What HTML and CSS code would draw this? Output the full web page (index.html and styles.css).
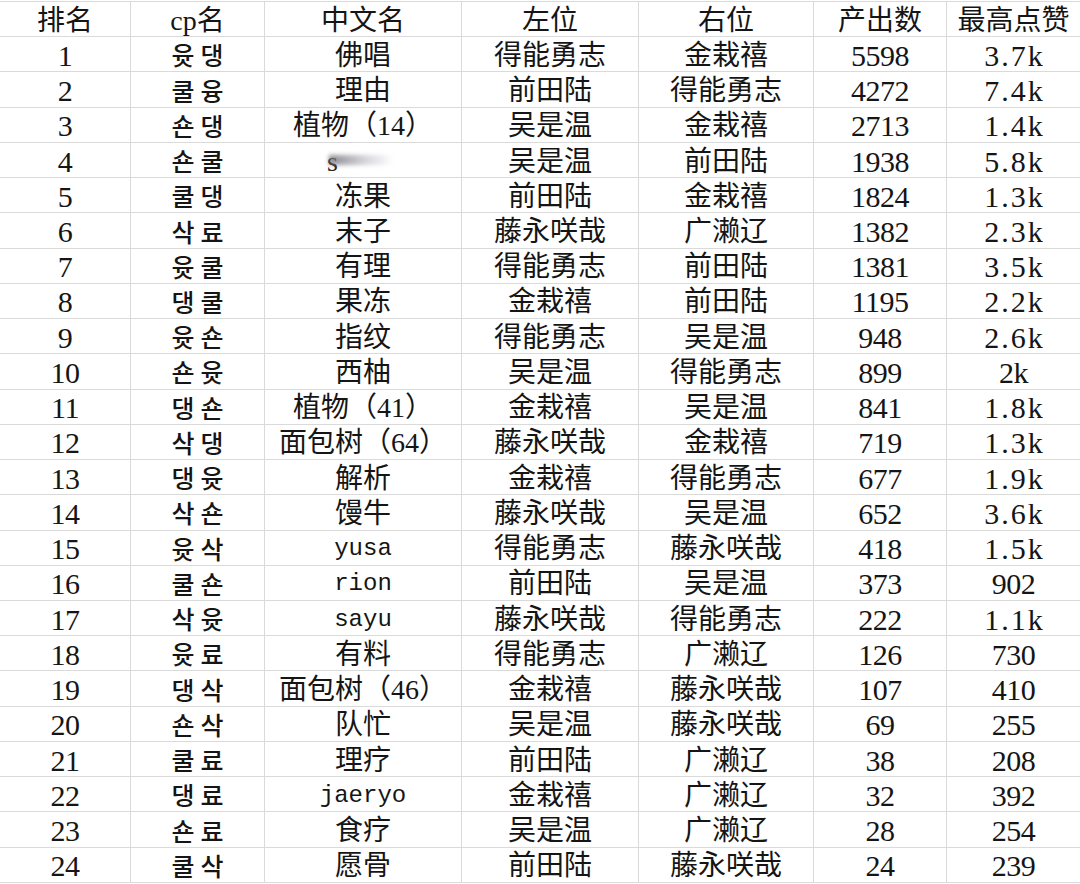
FILE: index.html
```html
<!DOCTYPE html>
<html lang="zh">
<head>
<meta charset="utf-8">
<link rel="stylesheet" href="styles.css">
</head>
<body>
<div class="sheet" id="sheet">
  <div class="c h">排名</div><div class="c h">cp名</div><div class="c h">中文名</div><div class="c h">左位</div><div class="c h">右位</div><div class="c h">产出数</div><div class="c h">最高点赞</div>
</div>
<script src="app.js"></script>
</body>
</html>
```

FILE: app.js
```js
const rows = [
["1","윳댕","佛唱","得能勇志","金栽禧","5598","3.7k"],
["2","쿨융","理由","前田陆","得能勇志","4272","7.4k"],
["3","숀댕","植物（14）","吴是温","金栽禧","2713","1.4k"],
["4","숀쿨","__BLUR__","吴是温","前田陆","1938","5.8k"],
["5","쿨댕","冻果","前田陆","金栽禧","1824","1.3k"],
["6","삭료","末子","藤永咲哉","广濑辽","1382","2.3k"],
["7","윳쿨","有理","得能勇志","前田陆","1381","3.5k"],
["8","댕쿨","果冻","金栽禧","前田陆","1195","2.2k"],
["9","윳숀","指纹","得能勇志","吴是温","948","2.6k"],
["10","숀윳","西柚","吴是温","得能勇志","899","2k"],
["11","댕숀","植物（41）","金栽禧","吴是温","841","1.8k"],
["12","삭댕","面包树（64）","藤永咲哉","金栽禧","719","1.3k"],
["13","댕윳","解析","金栽禧","得能勇志","677","1.9k"],
["14","삭숀","馒牛","藤永咲哉","吴是温","652","3.6k"],
["15","윳삭","yusa","得能勇志","藤永咲哉","418","1.5k"],
["16","쿨숀","rion","前田陆","吴是温","373","902"],
["17","삭윳","sayu","藤永咲哉","得能勇志","222","1.1k"],
["18","윳료","有料","得能勇志","广濑辽","126","730"],
["19","댕삭","面包树（46）","金栽禧","藤永咲哉","107","410"],
["20","숀삭","队忙","吴是温","藤永咲哉","69","255"],
["21","쿨료","理疗","前田陆","广濑辽","38","208"],
["22","댕료","jaeryo","金栽禧","广濑辽","32","392"],
["23","숀료","食疗","吴是温","广濑辽","28","254"],
["24","쿨삭","愿骨","前田陆","藤永咲哉","24","239"]
];
const sheet = document.getElementById('sheet');
const cls = ["num","kr","zh","zh","zh","num","num"];
for (const r of rows) {
  r.forEach((v, i) => {
    const d = document.createElement('div');
    d.className = 'c ' + cls[i];
    if (v === "__BLUR__") {
      d.innerHTML = '<span class="blurwrap"><span class="bs">s</span><span class="blur"></span></span>';
    } else if (/^[a-z]+$/.test(v)) {
      d.classList.add('lat');
      d.textContent = v;
    } else if (i === 6 && v.indexOf('.') > 0) {
      d.classList.add('dec');
      d.textContent = v;
    } else {
      d.textContent = v;
    }
    sheet.appendChild(d);
  });
}
```

FILE: styles.css
```css
html, body {
  margin: 0;
  padding: 0;
  background: #ffffff;
}
.sheet {
  display: grid;
  grid-template-columns: 131px 134px 197px 177px 175px 133px 133px;
  grid-auto-rows: 35.24px;
  margin-top: 1px;
  border-top: 1px solid #dadada;
  color: #151515;
  font-family: "Liberation Serif", "Noto Sans CJK SC", serif;
  font-size: 28px;
}
.c {
  box-sizing: border-box;
  border-right: 1px solid #dadada;
  border-bottom: 1px solid #dadada;
  display: flex;
  align-items: center;
  justify-content: center;
  padding-top: 3px;
  white-space: nowrap;
  line-height: 1;
}
.c:nth-child(7n) {
  border-right: none;
}
.h {
  font-family: "Liberation Serif", "Noto Sans CJK SC", serif;
  font-weight: 400;
}
.num {
  font-size: 30px;
  letter-spacing: -0.5px;
}
.dec {
  letter-spacing: 2px;
  padding-left: 2px;
}
.kr {
  font-family: "Noto Sans CJK KR", sans-serif;
  font-size: 25px;
  font-weight: 500;
  letter-spacing: 6px;
  padding-left: 6px;
  padding-top: 1px;
}
.zh {
  font-family: "Liberation Serif", "Noto Sans CJK SC", serif;
}
.lat {
  font-family: "Liberation Mono", monospace;
  font-size: 24px;
}
.blurwrap {
  position: relative;
  display: inline-block;
  width: 64px;
  height: 28px;
  margin-left: -8px;
}
.bs {
  position: absolute;
  left: 0;
  top: 0;
  font-family: "Liberation Serif", serif;
  font-size: 28px;
  color: #222;
}
.blur {
  position: absolute;
  left: 2px;
  top: 7px;
  width: 64px;
  height: 10px;
  background: linear-gradient(to right, rgba(110,110,120,0.8), rgba(170,170,180,0.45) 60%, rgba(255,255,255,0));
  filter: blur(2px);
}
```
